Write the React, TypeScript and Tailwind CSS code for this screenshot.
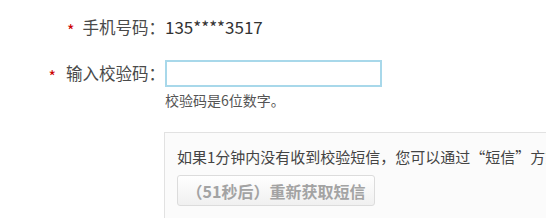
export default function App() {
  return (
    <div
      className="w-[546px] h-[218px] overflow-hidden bg-white text-[#4a4a4a]"
      style={{ fontFamily: '"Microsoft YaHei", "Noto Sans CJK SC", "Noto Sans", sans-serif' }}
    >
      <div className="pt-[15px]">
        <div className="flex items-center h-6 leading-6">
          <div className="w-[165px] text-right text-[16.5px]">
            <span className="inline-block translate-y-[3px] text-[#c00] mr-[8px] text-[16px]">*</span>
            <span>手机号码：</span>
          </div>
          <span className="text-[#333] text-[17px]">135****3517</span>
        </div>

        <div className="flex items-center mt-[21px] h-[27px]">
          <div className="w-[165px] text-right text-[16.5px]">
            <span className="inline-block translate-y-[3px] text-[#c00] mr-[10px] text-[16px]">*</span>
            <span>输入校验码：</span>
          </div>
          <input
            type="text"
            className="w-[217px] h-[27px] border-2 border-[#a8d8ea] outline-none bg-white"
          />
        </div>

        <div className="pl-[165px] mt-[3px] text-[14px] leading-5 text-[#555]">校验码是6位数字。</div>

        <div className="ml-[164px] mt-[22px] border border-[#e2e2e2] border-r-0 bg-[#fbfbfb] pl-[12px] pt-[14px] pb-6 whitespace-nowrap">
          <p className="text-[15px] leading-5 text-[#444]">
            如果1分钟内没有收到校验短信，您可以通过
            <span className="inline-block w-[15px] text-right">“</span>
            短信
            <span className="inline-block w-[15px] text-left">”</span>
            方式重新获取
          </p>
          <button
            type="button"
            disabled
            className="mt-[8px] w-[198px] h-[31px] rounded-[3px] border border-[#dcdcdc] bg-gradient-to-b from-white to-[#f0f0f0] text-[16px] font-semibold text-[#a3a3a3] text-center"
          >
            （51秒后）重新获取短信
          </button>
        </div>
      </div>
    </div>
  );
}
